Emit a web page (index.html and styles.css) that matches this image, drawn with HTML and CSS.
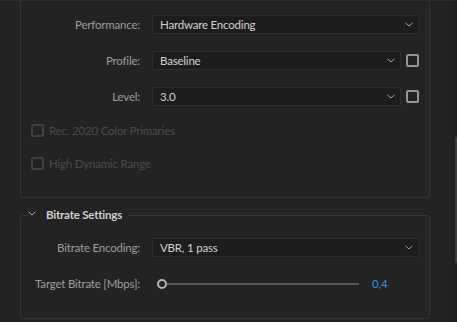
FILE: index.html
```html
<!DOCTYPE html>
<html>
<head>
<meta charset="utf-8">
<link rel="stylesheet" href="styles.css">
</head>
<body>
<div class="app">
  <div class="content">
    <div class="panel">
      <div class="row">
        <span class="lbl">Performance:</span>
        <div class="ctl">
          <div class="select"><span>Hardware Encoding</span><svg class="chev" width="8" height="5" viewBox="0 0 8 5"><path d="M0.5 0.8 L4 4 L7.5 0.8" fill="none" stroke="#a8a8a8" stroke-width="1"/></svg></div>
        </div>
      </div>
      <div class="row">
        <span class="lbl">Profile:</span>
        <div class="ctl">
          <div class="select"><span>Baseline</span><svg class="chev" width="8" height="5" viewBox="0 0 8 5"><path d="M0.5 0.8 L4 4 L7.5 0.8" fill="none" stroke="#a8a8a8" stroke-width="1"/></svg></div>
          <span class="cb"></span>
        </div>
      </div>
      <div class="row">
        <span class="lbl">Level:</span>
        <div class="ctl">
          <div class="select"><span>3.0</span><svg class="chev" width="8" height="5" viewBox="0 0 8 5"><path d="M0.5 0.8 L4 4 L7.5 0.8" fill="none" stroke="#a8a8a8" stroke-width="1"/></svg></div>
          <span class="cb"></span>
        </div>
      </div>
      <div class="check disabled first"><span class="cb"></span><span>Rec. 2020 Color Primaries</span></div>
      <div class="check disabled"><span class="cb"></span><span>High Dynamic Range</span></div>
    </div>

    <fieldset class="group">
      <legend><svg class="lchev" width="8" height="5" viewBox="0 0 8 5"><path d="M0.5 0.8 L4 4 L7.5 0.8" fill="none" stroke="#b0b0b0" stroke-width="1"/></svg><span>Bitrate Settings</span></legend>
      <div class="row">
        <span class="lbl">Bitrate Encoding:</span>
        <div class="ctl">
          <div class="select"><span>VBR, 1 pass</span><svg class="chev" width="8" height="5" viewBox="0 0 8 5"><path d="M0.5 0.8 L4 4 L7.5 0.8" fill="none" stroke="#a8a8a8" stroke-width="1"/></svg></div>
        </div>
      </div>
      <div class="row">
        <span class="lbl">Target Bitrate [Mbps]:</span>
        <div class="ctl slider">
          <span class="knob"></span>
          <span class="track"></span>
          <span class="value">0,4</span>
        </div>
      </div>
    </fieldset>
  </div>
  <div class="scrollbar"><div class="thumb"></div></div>
</div>
</body>
</html>
```

FILE: styles.css
```css
html, body {
  margin: 0;
  padding: 0;
  background: #232323;
}
body {
  font-family: Lato, "Liberation Sans", sans-serif;
  font-size: 11.5px;
  letter-spacing: -0.2px;
  color: #a0a0a0;
}
.app {
  display: flex;
  width: 457px;
  height: 322px;
  overflow: hidden;
  border-top: 1px solid #2c2c2c;
  box-sizing: border-box;
}
.content {
  width: 452px;
  padding-left: 20px;
  box-sizing: border-box;
}
.panel {
  width: 410px;
  box-sizing: border-box;
  border: 1px solid #343434;
  border-top: none;
  border-radius: 0 0 3px 3px;
  padding: 14px 10px 24px 0;
}
.row {
  display: grid;
  grid-template-columns: 119px 1fr;
  column-gap: 12px;
  height: 19px;
  align-items: center;
}
.row + .row {
  margin-top: 17px;
}
.lbl {
  text-align: right;
  color: #9e9e9e;
  white-space: nowrap;
}
.ctl {
  display: flex;
  align-items: center;
  gap: 5px;
  height: 19px;
}
.select {
  flex: 1;
  height: 19px;
  box-sizing: border-box;
  background: #1d1d1d;
  border: 1px solid #2e2e2e;
  border-radius: 2px;
  display: flex;
  align-items: center;
  justify-content: space-between;
  padding: 0 5px 0 7px;
  color: #d2d2d2;
}
.chev {
  display: block;
}
.cb {
  width: 13px;
  height: 13px;
  box-sizing: border-box;
  border: 2px solid #959595;
  border-radius: 2px;
  flex: none;
}
.check {
  display: flex;
  align-items: center;
  gap: 5px;
  height: 20px;
  padding-left: 10px;
  margin-top: 13px;
}
.check.first {
  margin-top: 14px;
}
.check.disabled {
  color: #4c4c4c;
}
.check.disabled .cb {
  border-color: #404040;
}
.group {
  margin: 10px 0 0 0;
  padding: 16px 10px 25px 0;
  width: 410px;
  box-sizing: border-box;
  min-width: 0;
  border: 1px solid #343434;
  border-radius: 3px;
}
.group legend {
  padding: 0 6px 0 0;
  margin-left: 6px;
  line-height: 14px;
  display: flex;
  align-items: center;
  font-weight: bold;
  color: #cfcfcf;
}
.lchev {
  margin: 0 10px 0 1px;
  position: relative;
  top: -2px;
}
.slider {
  gap: 0;
  padding-left: 5px;
}
.knob {
  width: 10px;
  height: 10px;
  box-sizing: border-box;
  border: 2px solid #b4b4b4;
  border-radius: 50%;
  flex: none;
}
.track {
  width: 192px;
  height: 2px;
  background: #555555;
}
.value {
  margin-left: 13px;
  color: #3c8fe0;
}
.scrollbar {
  width: 5px;
  background: #1f1f1f;
}
.thumb {
  margin-top: 136px;
  margin-left: 3px;
  width: 2px;
  height: 126px;
  background: #3c3c3c;
}
```
